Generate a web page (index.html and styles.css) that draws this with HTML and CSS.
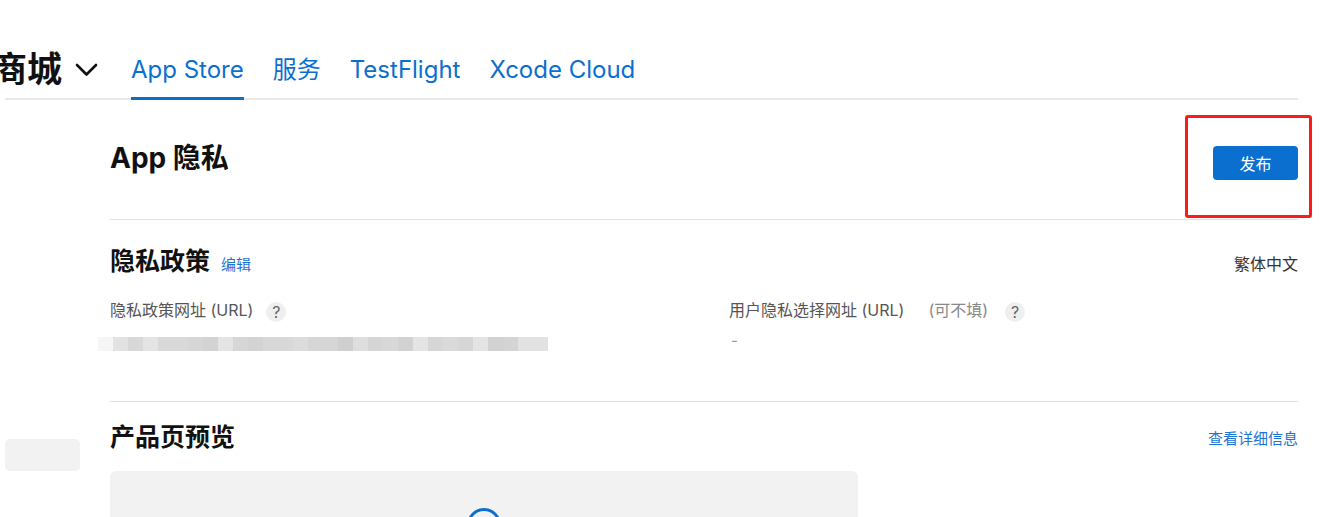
FILE: index.html
```html
<!DOCTYPE html>
<html lang="zh-CN">
<head>
<meta charset="utf-8">
<title>App 隐私</title>
<link rel="stylesheet" href="styles.css">
</head>
<body>
<header class="topbar">
  <div class="brand">
    <span class="brand-name">商城</span>
    <svg class="chevron" width="23" height="14" viewBox="0 0 23 14"><path d="M2 2 L11.5 11.5 L21 2" fill="none" stroke="#111" stroke-width="2.6" stroke-linecap="round" stroke-linejoin="round"/></svg>
  </div>
  <nav class="tabs">
    <a class="tab active">App Store</a>
    <a class="tab">服务</a>
    <a class="tab">TestFlight</a>
    <a class="tab">Xcode Cloud</a>
  </nav>
</header>
<div class="content">
  <aside class="sidebar">
    <div class="side-box"></div>
  </aside>
  <main class="main">
    <section class="title-row">
      <h1 class="page-title">App 隐私</h1>
      <div class="publish-wrap">
        <button class="publish">发布</button>
        <span class="highlight"></span>
      </div>
    </section>
    <section class="policy">
      <div class="section-head">
        <div class="head-left">
          <h2 class="section-title">隐私政策</h2>
          <a class="edit">编辑</a>
        </div>
        <span class="lang">繁体中文</span>
      </div>
      <div class="fields">
        <div class="field">
          <div class="label">隐私政策网址 (URL)<span class="help">?</span></div>
          <div class="blurred"></div>
        </div>
        <div class="field">
          <div class="label">用户隐私选择网址 (URL)<span class="optional">(可不填)</span><span class="help">?</span></div>
          <div class="value">-</div>
        </div>
      </div>
    </section>
    <section class="preview">
      <div class="section-head centered">
        <h2 class="section-title">产品页预览</h2>
        <a class="more">查看详细信息</a>
      </div>
      <div class="preview-box">
        <div class="spinner"></div>
      </div>
    </section>
  </main>
</div>
</body>
</html>
```
FILE: styles.css
```css
html, body {
  margin: 0;
  padding: 0;
  background: #fff;
  overflow: hidden;
}
body {
  font-family: Inter, "Noto Sans CJK SC", sans-serif;
  color: #1d1d1f;
  width: 1329px;
  height: 517px;
}
.topbar {
  display: flex;
  align-items: flex-end;
  height: 100px;
  box-sizing: border-box;
  margin: 0 31px 0 5px;
  border-bottom: 2px solid #e8e8e8;
}
.brand {
  display: flex;
  align-items: center;
  height: 40px;
  padding-bottom: 9px;
  margin-left: -13px;
}
.brand-name {
  font-size: 35px;
  line-height: 40px;
  font-weight: 700;
  color: #111;
}
.chevron {
  margin-left: 13px;
  margin-top: 2px;
}
.tabs {
  display: flex;
  gap: 29px;
  margin-left: 33px;
}
.tab {
  font-size: 24px;
  line-height: 30px;
  color: #0a6fd0;
  padding-bottom: 12px;
  border-bottom: 3px solid transparent;
  margin-bottom: -2px;
}
.tab.active {
  border-bottom-color: #0a6fd0;
}
.content {
  display: flex;
}
.sidebar {
  width: 110px;
  flex: none;
}
.side-box {
  margin: 339px 0 0 5px;
  width: 75px;
  height: 32px;
  background: #f2f2f2;
  border-radius: 5px;
}
.main {
  flex: 1;
  margin-right: 31px;
}
.title-row {
  display: flex;
  justify-content: space-between;
  align-items: flex-start;
  padding: 46px 0 39px;
  border-bottom: 1px solid #e2e2e2;
}
.page-title {
  margin: -5px 0 0;
  font-size: 28px;
  line-height: 34px;
  font-weight: 700;
  color: #111;
}
.publish-wrap {
  position: relative;
}
.publish {
  display: block;
  width: 85px;
  height: 34px;
  border: none;
  border-radius: 4px;
  background: #0a6fcf;
  color: #fff;
  font-family: Inter, "Noto Sans CJK SC", sans-serif;
  font-size: 16px;
  padding: 0;
}
.highlight {
  position: absolute;
  left: -28px;
  right: -14px;
  top: -31px;
  bottom: -38px;
  border: 3px solid #ff1a1a;
  border-radius: 3px;
}
.section-head {
  display: flex;
  justify-content: space-between;
  align-items: baseline;
}
.section-head.centered {
  align-items: center;
}
.head-left {
  display: flex;
  align-items: baseline;
  gap: 11px;
}
.section-title {
  margin: 0;
  font-size: 25px;
  line-height: 30px;
  font-weight: 700;
  color: #111;
}
.edit, .more {
  font-size: 15px;
  color: #1c74d4;
}
.lang {
  font-size: 16px;
  color: #333;
}
.policy {
  padding: 26px 0 0;
  height: 155px;
  border-bottom: 1px solid #e2e2e2;
}
.fields {
  display: grid;
  grid-template-columns: 619px 1fr;
  margin-top: 22px;
}
.label {
  display: flex;
  align-items: center;
  font-size: 16px;
  line-height: 22px;
  color: #555;
}
.help {
  display: inline-flex;
  align-items: center;
  justify-content: center;
  width: 20px;
  height: 20px;
  margin-left: 13px;
  margin-top: 4px;
  border-radius: 50%;
  background: #efefef;
  color: #666;
  font-size: 16px;
}
.optional {
  margin-left: 24px;
  color: #888;
  margin-right: 4px;
}
.blurred {
  margin: 15px 0 0 -12px;
  width: 450px;
  height: 14px;
  background: linear-gradient(to right,
    #f5f5f5 0 15px, #e2e2e2 15px 30px, #d8d8d8 30px 45px, #e4e4e4 45px 60px,
    #d9d9d9 60px 90px, #d6d6d6 90px 105px, #d3d3d3 105px 120px, #e4e4e4 120px 135px,
    #d6d6d6 135px 150px, #d3d3d3 150px 165px, #d8d8d8 165px 195px, #dcdcdc 195px 210px,
    #d6d6d6 210px 240px, #cfcfcf 240px 255px, #dedede 255px 270px, #d5d5d5 270px 285px,
    #d8d8d8 285px 300px, #d2d2d2 300px 315px, #e4e4e4 315px 330px, #d6d6d6 330px 345px,
    #dadada 345px 360px, #d6d6d6 360px 375px, #e4e4e4 375px 390px, #d2d2d2 390px 405px,
    #d4d4d4 405px 420px, #e2e2e2 420px 450px);
}
.value {
  margin-top: 8px;
  font-size: 15px;
  line-height: 22px;
  color: #999;
  padding-left: 2px;
}
.preview {
  padding-top: 20px;
}
.preview-box {
  margin-top: 19px;
  width: 748px;
  height: 120px;
  background: #f2f2f2;
  border-radius: 6px;
  display: flex;
  justify-content: center;
  padding-top: 37px;
  box-sizing: border-box;
}
.spinner {
  width: 34px;
  height: 34px;
  box-sizing: border-box;
  border: 3px solid #0a6fd0;
  border-radius: 50%;
}
```
